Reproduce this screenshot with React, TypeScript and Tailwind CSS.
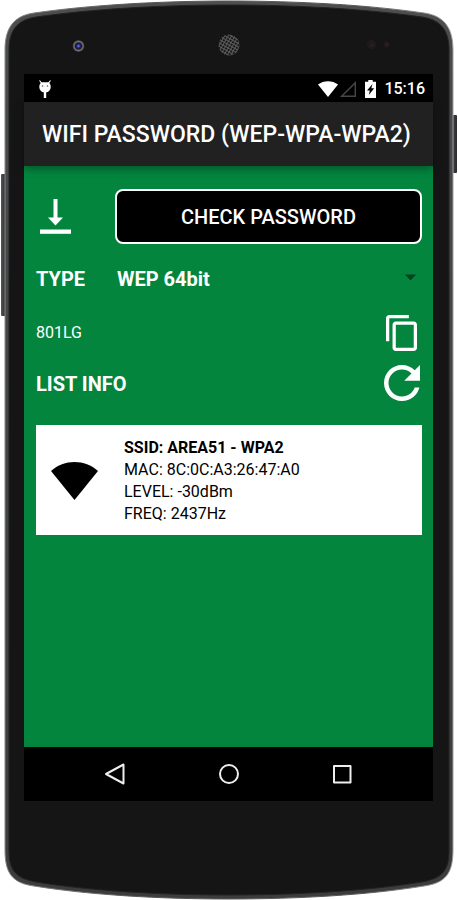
import { useState } from 'react'

const network = {
  ssid: 'AREA51 - WPA2',
  mac: '8C:0C:A3:26:47:A0',
  level: '-30dBm',
  freq: '2437Hz',
}

const BODY =
  'M5 50 C5 30 12 16 34 13 C90 5 160 1 229 1 C298 1 368 5 424 13 C446 16 453 30 453 50 V850 C453 873 446 883 424 886 C368 895 298 899 229 899 C160 899 90 895 34 886 C12 883 5 873 5 850 Z'
const FACE =
  'M9 50 C9 32 16 20 36 17 C92 9 160 5 229 5 C298 5 366 9 422 17 C442 20 449 32 449 50 V850 C449 870 443 878 422 882 C366 891 298 895 229 895 C160 895 92 891 36 882 C15 878 9 870 9 850 Z'

function PhoneBody() {
  return (
    <svg className="absolute inset-0 w-full h-full" viewBox="0 0 458 900" preserveAspectRatio="none" aria-hidden="true">
      <defs>
        <linearGradient id="key" x1="0" x2="1">
          <stop offset="0" stopColor="#555759" />
          <stop offset="0.4" stopColor="#3c3e40" />
          <stop offset="1" stopColor="#2a2a2b" />
        </linearGradient>
        <linearGradient id="rim" x1="0" x2="0" y1="0" y2="1">
          <stop offset="0" stopColor="#4c4f4d" />
          <stop offset="0.1" stopColor="#48494a" />
          <stop offset="1" stopColor="#3c3c3c" />
        </linearGradient>
        <linearGradient id="edge" x1="0" x2="1">
          <stop offset="0" stopColor="#85878a" />
          <stop offset="0.3" stopColor="#555755" />
          <stop offset="0.8" stopColor="#555755" />
          <stop offset="1" stopColor="#a0a0a4" />
        </linearGradient>
        <pattern id="mesh" width="3" height="3" patternUnits="userSpaceOnUse" patternTransform="rotate(30)">
          <rect width="3" height="3" fill="#5c5c5c" />
          <rect width="2" height="2" fill="#181818" />
        </pattern>
        <radialGradient id="lens">
          <stop offset="0" stopColor="#7b83d8" />
          <stop offset="0.3" stopColor="#20248e" />
          <stop offset="0.5" stopColor="#16161c" />
          <stop offset="0.75" stopColor="#777" />
          <stop offset="1" stopColor="#2c2c2c" />
        </radialGradient>
      </defs>

      {/* side keys */}
      <rect x="1" y="174" width="6" height="142" rx="1" fill="url(#key)" />
      <rect x="451" y="115" width="6" height="58" rx="1" fill="url(#key)" />

      <path d={BODY} fill="url(#rim)" stroke="url(#edge)" strokeWidth="1" />
      <path d={FACE} fill="#151515" stroke="#222" strokeWidth="1" />

      {/* camera, speaker, sensors */}
      <circle cx="78.5" cy="46" r="6" fill="url(#lens)" />
      <circle cx="229" cy="45" r="10.5" fill="url(#mesh)" />
      <circle cx="371.5" cy="44.5" r="4.5" fill="#1f1b1b" />
      <circle cx="372" cy="45" r="1.5" fill="#2c2121" />
      <circle cx="386.5" cy="44.5" r="3" fill="#211b1b" />
      <circle cx="387" cy="44.5" r="1.2" fill="#302323" />
    </svg>
  )
}

function StatusBar() {
  return (
    <div className="flex items-center h-7 bg-black text-white pt-px pl-3.5 pr-2">
      <svg width="14" height="18" viewBox="0 0 14 18" fill="#fff" aria-hidden="true">
        <path d="M1.5 0.5 L3.5 3 M12.5 0.5 L10.5 3" stroke="#fff" strokeWidth="1.2" />
        <path d="M3 2.2 H11 L12.5 5 C13.5 9 11 12.5 7 12.5 C3 12.5 0.5 9 1.5 5 Z" />
        <rect x="5.8" y="12" width="2.4" height="6" />
        <circle cx="4.5" cy="6" r="0.8" fill="#555" />
        <circle cx="9.5" cy="6" r="0.8" fill="#555" />
      </svg>
      <div className="ml-auto flex items-center">
        <svg width="20" height="16" viewBox="0 0 20 16" fill="#fff" aria-hidden="true">
          <path d="M10 16 L0 3.5 C5.5 -1 14.5 -1 20 3.5 Z" />
        </svg>
        <svg className="ml-0.5" width="16" height="16" viewBox="0 0 16 16" fill="none" stroke="#484848" strokeWidth="1.4" aria-hidden="true">
          <path d="M1.7 15.3 H15.3 V1.7 Z" />
        </svg>
        <svg className="ml-[9px]" width="11" height="18" viewBox="0 0 11 18" aria-hidden="true">
          <path d="M3.3 0 H7.7 V1.8 H11 V18 H0 V1.8 H3.3 Z" fill="#fff" />
          <path d="M7.5 4 L2 10.5 H4.8 L3.8 15 L9.2 8.3 H6.3 Z" fill="#000" />
        </svg>
        <span className="ml-2 text-base leading-5 font-medium">15:16</span>
      </div>
    </div>
  )
}

function NavBar() {
  return (
    <nav className="flex items-center justify-center gap-[90px] h-[54px] bg-black">
      <button type="button" aria-label="Back">
        <svg width="24" height="24" viewBox="0 0 24 24" fill="none" stroke="#eee" strokeWidth="2" strokeLinejoin="round">
          <path d="M20.5 2.5 V21.5 L3 12 Z" />
        </svg>
      </button>
      <button type="button" aria-label="Home">
        <svg width="24" height="24" viewBox="0 0 24 24" fill="none" stroke="#eee" strokeWidth="2">
          <circle cx="12" cy="12" r="9" />
        </svg>
      </button>
      <button type="button" aria-label="Recent apps">
        <svg width="24" height="24" viewBox="0 0 24 24" fill="none" stroke="#eee" strokeWidth="2" strokeLinejoin="round">
          <rect x="3" y="4" width="16.5" height="16.5" />
        </svg>
      </button>
    </nav>
  )
}

export default function App() {
  const [type, setType] = useState('WEP 64bit')

  return (
    <div className="relative min-h-screen flex flex-col bg-white pt-[74px] pb-[99px] pl-6 pr-[25px] font-[Roboto,sans-serif]">
      <PhoneBody />

      <div className="relative flex-1 flex flex-col">
        <StatusBar />

        <header className="relative flex items-center h-16 bg-[#212121] pt-0.5 px-[18px] shadow-[0_3px_8px_rgba(0,0,0,0.35)] z-10">
          <h1 className="text-[23px] leading-8 font-medium text-white whitespace-nowrap">WIFI PASSWORD (WEP-WPA-WPA2)</h1>
        </header>

        <main className="flex-1 bg-[#03853e] text-white pl-3 pr-[11px] pt-[23px]">
          <div className="grid grid-cols-[79px_1fr] items-center">
            <button type="button" aria-label="Download" className="justify-self-start pl-1">
              <svg width="31" height="36" viewBox="0 0 31 36" fill="#fff">
                <path d="M13.5 0 H17.5 V18.500 H23 L15.5 26.500 L8 18.500 H13.5 Z" />
                <rect y="30.5" width="31" height="4.3" />
              </svg>
            </button>
            <button
              type="button"
              className="h-[55px] rounded-lg border-2 border-white bg-black text-xl font-medium"
            >
              CHECK PASSWORD
            </button>
          </div>

          <div className="mt-2 grid grid-cols-[79px_1fr] items-center h-[54px] text-xl font-bold">
            <label htmlFor="type">TYPE</label>
            <div className="relative flex items-center">
              <select
                id="type"
                value={type}
                onChange={(e) => setType(e.target.value)}
                className="w-full appearance-none bg-transparent pl-0.5 pr-8 font-bold outline-none"
              >
                <option>WEP 64bit</option>
                <option>WEP 128bit</option>
                <option>WPA</option>
                <option>WPA2</option>
              </select>
              <svg className="absolute right-1.5 pointer-events-none" width="11" height="10" viewBox="0 0 11 10" fill="#02401e" aria-hidden="true">
                <path d="M0 0.5 H11 L5.5 6.5 Z" />
              </svg>
            </div>
          </div>

          <div className="flex items-center justify-between h-[54px]">
            <span className="text-base">801LG</span>
            <button type="button" aria-label="Copy" className="pr-[5px]">
              <svg width="31" height="36" viewBox="2 1 19 22" fill="#fff">
                <path d="M16 1H4c-1.1 0-2 .9-2 2v14h2V3h12V1zm3 4H8c-1.1 0-2 .9-2 2v14c0 1.100.9 2 2 2h11c1.1 0 2-.9 2-2V7c0-1.100-.9-2-2-2zm0 16H8V7h11v14z" />
              </svg>
            </button>
          </div>

          <div className="flex items-center justify-between h-12">
            <h2 className="text-xl font-bold">LIST INFO</h2>
            <button type="button" aria-label="Refresh" className="pb-0.5 pr-0.5">
              <svg width="36" height="36" viewBox="4 4 16 16" fill="#fff">
                <path d="M17.65 6.35C16.2 4.9 14.21 4 12 4c-4.42 0-7.99 3.58-7.99 8s3.57 8 7.99 8c3.73 0 6.84-2.55 7.73-6h-2.08c-.82 2.33-3.04 4-5.65 4-3.31 0-6-2.69-6-6s2.69-6 6-6c1.66 0 3.14.69 4.22 1.78L13 11h7V4l-2.35 2.35z" />
              </svg>
            </button>
          </div>

          <article className="mt-[17px] flex items-center bg-white text-black px-[15px] pt-3 pb-2.5">
            <svg width="47" height="38" viewBox="0 0 47 38" aria-hidden="true">
              <path d="M23.5 38 L0 9 C13 -3 34 -3 47 9 Z" />
            </svg>
            <div className="ml-[26px] text-base leading-[22px]">
              <p className="font-bold">SSID: {network.ssid}</p>
              <p>MAC: {network.mac}</p>
              <p>LEVEL: {network.level}</p>
              <p>FREQ: {network.freq}</p>
            </div>
          </article>
        </main>

        <NavBar />
      </div>
    </div>
  )
}
